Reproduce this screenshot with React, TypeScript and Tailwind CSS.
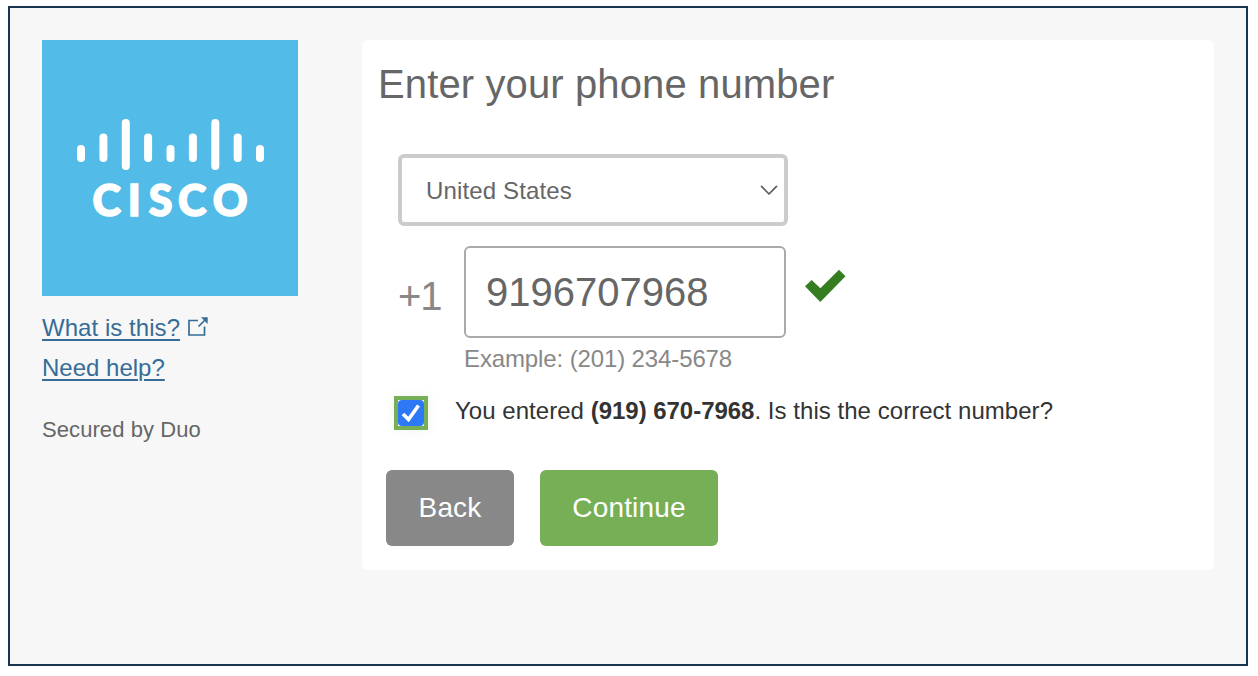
import React from "react";

const bars = [
  [35, 105, 17],
  [57.4, 93.5, 28.5],
  [79.8, 79, 51],
  [102.1, 93.5, 28.5],
  [124.5, 105, 17],
  [146.9, 93.5, 28.5],
  [169.3, 79, 51],
  [191.7, 93.5, 28.5],
  [214, 105, 17],
];

function Logo() {
  return (
    <svg viewBox="0 0 256 256" className="block size-64 bg-[#53bbe7]" role="img" aria-label="Cisco">
      <g fill="#fff">
        {bars.map(([x, y, h]) => (
          <rect key={x} x={x} y={y} width="8" height={h} rx="4" />
        ))}
        <text
          x="50.5 85.7 106.7 136 170.8"
          y="175.5"
          stroke="#fff"
          strokeWidth="1.6"
          className="font-[Lato] font-black text-[43px]"
        >
          CISCO
        </text>
      </g>
    </svg>
  );
}

function Sidebar() {
  return (
    <aside className="flex w-64 flex-col text-2xl leading-10">
      <Logo />
      <div className="mt-3 flex h-10 items-center text-[#366d97]">
        <a href="#" className="tracking-[0.05px] underline decoration-2 underline-offset-[3px]">What is this?</a>
        <svg width="20" height="20" viewBox="0 0 20 20" className="mb-[3px] ml-2" fill="none" stroke="currentColor" strokeWidth="1.7">
          <path d="M10 3.500H1V18h15.500V9.500M10.500 9.500L17 3" />
          <path d="M13 .3h6.700v6.700z" fill="currentColor" stroke="none" />
        </svg>
      </div>
      <a href="#" className="h-10 text-[#366d97] underline decoration-2 underline-offset-[3px]">Need help?</a>
      <p className="mt-[22px] text-[22px] tracking-[0.08px] text-[#666]">Secured by Duo</p>
    </aside>
  );
}

function CountrySelect() {
  return (
    <button className="ml-5 mt-[46px] flex h-[72px] w-[390px] items-center justify-between rounded-md border-4 border-[#ccc] pl-6 pr-[6px] text-2xl tracking-[0.14px] text-[#666]">
      <span className="pt-px">United States</span>
      <svg width="18" height="12" viewBox="0 0 18 12" fill="none" stroke="#5c5c5c" strokeWidth="1.7" strokeLinecap="round" strokeLinejoin="round">
        <path d="M1.500 2.300L9 10l7.500-7.700" />
      </svg>
    </button>
  );
}

export default function App() {
  return (
    <div className="h-[676px] w-[1258px] bg-white pl-2 pt-[6px] font-['Liberation_Sans',Arial,sans-serif]">
      <div className="flex h-[660px] w-[1240px] items-start gap-16 border-2 border-[#193550] bg-[#f7f7f7] px-8 pt-8">
        <Sidebar />
        <main className="h-[530px] w-[852px] rounded-md bg-white pl-4 pt-5">
          <h1 className="h-12 text-[40px] leading-[48px] tracking-[0.12px] text-[#666]">Enter your phone number</h1>
          <CountrySelect />
          <div className="ml-5 mt-5 flex h-[92px]">
            <span className="w-[66px] pt-[26px] text-[40px] leading-[48px] tracking-[-1px] text-[#888]">+1</span>
            <input
              aria-label="Phone number"
              defaultValue="9196707968"
              className="w-[322px] rounded-md border-2 border-[#aaa] px-5 text-[40px] text-[#666] outline-none"
            />
            <svg width="42" height="34" viewBox="0 0 42 34" className="ml-[19px] mt-[23px] text-[#367d22]">
              <path d="M34 .8L40.500 7.300 15.300 33 0 17.200 6.700 11l8.700 8.300z" fill="currentColor" />
            </svg>
          </div>
          <p className="ml-[86px] mt-[5px] h-[31px] text-2xl tracking-[-0.12px] text-[#888]">Example: (201) 234-5678</p>
          <label className="ml-4 mt-[22px] flex h-[34px] items-start">
            <span className="flex size-[34px] items-center justify-center border-4 border-[#77af57] bg-white shadow-[0_0_10px_rgba(119,175,87,0.12)]">
              <span className="flex size-[26px] items-center justify-center rounded-[4px] bg-[#2c78f6]">
                <svg width="20" height="20" viewBox="0 0 20 20" fill="none" stroke="#fff" strokeWidth="3.700">
                  <path d="M2 11l5.500 5.500L17.500 2.500" />
                </svg>
              </span>
            </span>
            <span className="ml-[27px] text-2xl leading-[30px] tracking-[0.04px] text-[#333]">
              You entered <b className="tracking-[-0.03px]">(919) 670-7968</b>. Is this the correct number?
            </span>
          </label>
          <div className="ml-2 mt-10 flex gap-[26px] text-[28px] tracking-[0.15px] text-white">
            <button className="h-[76px] w-32 rounded-md bg-[#888]">Back</button>
            <button className="h-[76px] w-[178px] rounded-md bg-[#77af57]">Continue</button>
          </div>
        </main>
      </div>
    </div>
  );
}
